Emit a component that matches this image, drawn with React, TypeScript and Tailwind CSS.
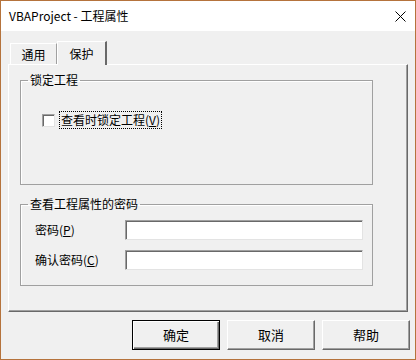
import React from "react";

const font = { fontFamily: "'Noto Sans CJK SC', 'Liberation Sans', sans-serif" };

const Sunken = "h-[20px] w-[238px] bg-white border border-t-[#a0a0a0] border-l-[#a0a0a0] border-r-[#e3e3e3] border-b-[#e3e3e3] shadow-[inset_1px_1px_0_#696969]";

const DialogButton = ({ label, primary }: { label: string; primary?: boolean }) => (
  <button
    type="button"
    className={
      primary
        ? "h-[30px] w-[88px] border border-black bg-[#f0f0f0] text-[13px] text-black shadow-[inset_1px_1px_0_#ffffff,inset_-1px_-1px_0_#696969,inset_-2px_-2px_0_#a0a0a0]"
        : "h-[30px] w-[88px] border border-t-white border-l-white border-r-[#696969] border-b-[#696969] bg-[#f0f0f0] text-[13px] text-black shadow-[inset_-1px_-1px_0_#a0a0a0]"
    }
  >
    {label}
  </button>
);

const App = () => {
  return (
    <div
      className="flex h-[360px] w-[416px] flex-col border border-[#b5733c] bg-[#f0f0f0] text-[12px] text-black"
      style={font}
    >
      {/* title bar */}
      <div className="flex h-[30px] items-center justify-between bg-white pl-2 pr-[9px]">
        <span className="text-[12px]">VBAProject - 工程属性</span>
        <svg width="11" height="11" viewBox="0 0 11 11">
          <path d="M0.5 0.5 L10.5 10.5 M10.5 0.5 L0.5 10.5" stroke="#000" strokeWidth="1" />
        </svg>
      </div>

      <div className="flex flex-1 flex-col px-[7px] pt-[10px]">
        {/* tabs */}
        <div className="flex h-[23px] items-end pl-[2px]">
          <div className="flex h-[21px] w-[47px] items-center justify-center border-t border-l border-r border-t-white border-l-white border-r-[#a0a0a0] pt-px">
            通用
          </div>
          <div className="relative z-10 -mb-px flex h-[24px] w-[50px] items-start justify-center border-t border-l border-r-2 border-t-white border-l-white border-r-[#696969] bg-[#f0f0f0] pt-[3px]">
            保护
          </div>
        </div>

        {/* tab page */}
        <div className="flex h-[248px] w-[400px] flex-col border border-t-white border-l-white border-r-[#696969] border-b-[#696969] pl-[11px] pt-[7px] shadow-[inset_-1px_-1px_0_#a0a0a0]">
          <fieldset className="h-[113px] w-[353px] border border-[#a0a0a0] shadow-[inset_1px_1px_0_#ffffff]">
            <legend className="ml-[7px] px-[2px] leading-[16px]">锁定工程</legend>
            <div className="flex items-center pl-[21px] pt-[23px]">
              <span className="h-[13px] w-[13px] border border-t-[#a0a0a0] border-l-[#a0a0a0] border-r-[#e3e3e3] border-b-[#e3e3e3] bg-white shadow-[inset_1px_1px_0_#696969]" />
              <span className="ml-[4px] border border-dotted border-black px-px leading-[16px]">
                查看时锁定工程(<u>V</u>)
              </span>
            </div>
          </fieldset>

          <fieldset className="mt-[11px] h-[90px] w-[353px] border border-[#a0a0a0] shadow-[inset_1px_1px_0_#ffffff]">
            <legend className="ml-[7px] px-[2px] leading-[16px]">查看工程属性的密码</legend>
            <div className="flex flex-col gap-[10px] pt-[8px]">
              <div className="flex h-[20px] items-center">
                <span className="w-[104px] pl-[14px] leading-[16px]">
                  密码(<u>P</u>)
                </span>
                <div className={Sunken} />
              </div>
              <div className="flex h-[20px] items-center">
                <span className="w-[104px] pl-[14px] leading-[16px]">
                  确认密码(<u>C</u>)
                </span>
                <div className={Sunken} />
              </div>
            </div>
          </fieldset>
        </div>

        {/* buttons */}
        <div className="mt-[8px] mr-[-2px] flex justify-end gap-[7px]">
          <DialogButton label="确定" primary />
          <DialogButton label="取消" />
          <DialogButton label="帮助" />
        </div>
      </div>
    </div>
  );
};

export default App;
